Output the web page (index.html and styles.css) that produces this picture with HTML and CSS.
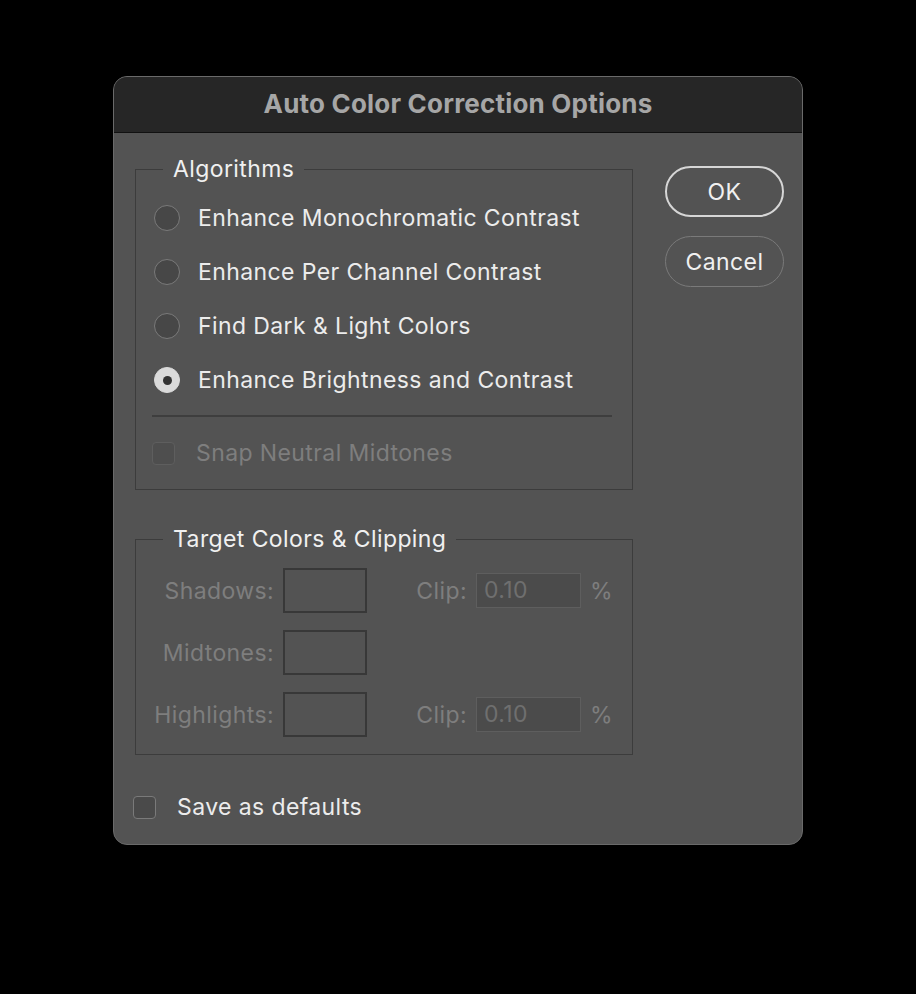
FILE: index.html
```html
<!DOCTYPE html>
<html lang="en">
<head>
    <meta charset="UTF-8">
    <meta name="viewport" content="width=device-width, initial-scale=1.0">
    <title>Auto Color Correction Options</title>
    <link rel="stylesheet" href="styles.css">
</head>
<body>
    <div class="dialog">
        <!-- title bar -->
        <div class="titlebar">Auto Color Correction Options</div>
        <div class="body">
            <div class="main">
                <fieldset class="group">
                    <legend>Algorithms</legend>
                    <div class="radios">
                        <label class="radio-row"><span class="radio"></span>Enhance Monochromatic Contrast</label>
                        <label class="radio-row"><span class="radio"></span>Enhance Per Channel Contrast</label>
                        <label class="radio-row"><span class="radio"></span>Find Dark &amp; Light Colors</label>
                        <label class="radio-row"><span class="radio checked"></span>Enhance Brightness and Contrast</label>
                    </div>
                    <div class="sep"></div>
                    <label class="check-row disabled"><span class="check"></span>Snap Neutral Midtones</label>
                </fieldset>

                <fieldset class="group targets">
                    <legend>Target Colors &amp; Clipping</legend>
                    <div class="grid">
                        <span class="lbl">Shadows:</span>
                        <span class="swatch"></span>
                        <span class="lbl">Clip:</span>
                        <span class="num">0.10</span>
                        <span class="pct">%</span>

                        <span class="lbl">Midtones:</span>
                        <span class="swatch"></span>
                        <span></span>
                        <span></span>
                        <span></span>

                        <span class="lbl">Highlights:</span>
                        <span class="swatch"></span>
                        <span class="lbl">Clip:</span>
                        <span class="num">0.10</span>
                        <span class="pct">%</span>
                    </div>
                </fieldset>

                <label class="check-row save"><span class="check"></span>Save as defaults</label>
            </div>
            <!-- buttons -->
            <div class="side">
                <button class="btn primary">OK</button>
                <button class="btn">Cancel</button>
            </div>
        </div>
    </div>
</body>
</html>
```

FILE: styles.css
```css
* {
  margin: 0;
  padding: 0;
  box-sizing: border-box;
}
body {
  background: #000;
  padding: 76px 0 0 113px;
  font-family: "Inter", "Liberation Sans", sans-serif;
  font-size: 23px;
  letter-spacing: 0.4px;
  color: #ececec;
}
.dialog {
  width: 690px;
  height: 769px;
  background: #535353;
  border: 1px solid #6a6a6a;
  border-radius: 14px;
  overflow: hidden;
}
.titlebar {
  height: 56px;
  background: #262626;
  border-bottom: 1px solid #111;
  color: #a6a6a6;
  font-weight: 700;
  font-size: 26px;
  letter-spacing: 0.2px;
  text-align: center;
  line-height: 53px;
}
.body {
  display: flex;
  padding: 23px 18px 0 21px;
}
.main {
  width: 498px;
}
.side {
  display: flex;
  flex-direction: column;
  gap: 19px;
  margin-left: 32px;
  padding-top: 10px;
}
.btn {
  width: 119px;
  height: 51px;
  border-radius: 26px;
  background: transparent;
  border: 1.5px solid #7a7a7a;
  color: #f0f0f0;
  font: 23px "Inter", "Liberation Sans", sans-serif;
  letter-spacing: 0.4px;
}
.btn.primary {
  border: 2px solid #d6d6d6;
}
.group {
  border: 1px solid #3c3c3c;
  padding: 0 20px 0 16px;
}
.group legend {
  margin-left: 11px;
  padding: 0 10px;
  line-height: 26px;
  color: #f0f0f0;
}
.radios {
  padding-top: 9px;
}
.radio-row {
  display: flex;
  align-items: center;
  height: 54px;
}
.radio {
  width: 26px;
  height: 26px;
  border-radius: 50%;
  background: #474747;
  border: 1.5px solid #7a7a7a;
  margin: 0 18px 0 2px;
  display: flex;
  align-items: center;
  justify-content: center;
}
.radio.checked {
  background: #dadada;
  border-color: #dadada;
}
.radio.checked::after {
  content: "";
  width: 9px;
  height: 9px;
  border-radius: 50%;
  background: #333;
}
.sep {
  height: 2px;
  background: #3e3e3e;
  margin-top: 8px;
}
.check-row {
  display: flex;
  align-items: center;
  height: 74px;
}
.check {
  width: 23px;
  height: 23px;
  border: 1.5px solid #7a7a7a;
  background: #4a4a4a;
  border-radius: 4px;
  margin-right: 21px;
}
.check-row.disabled {
  color: #7e7e7e;
  height: 72px;
}
.check-row.disabled .check {
  border-color: #5e5e5e;
  background: #4e4e4e;
}
.targets {
  margin-top: 36px;
  padding: 0;
}
.targets legend {
  margin-left: 27px;
}
.grid {
  display: grid;
  grid-template-columns: 138px 84px 91px 105px auto;
  grid-auto-rows: 45px;
  column-gap: 9px;
  row-gap: 17px;
  align-items: center;
  padding: 16px 0 17px;
  color: #7e7e7e;
}
.lbl {
  text-align: right;
}
.swatch {
  height: 45px;
  border: 2px solid #383838;
}
.num {
  height: 35px;
  background: #4b4b4b;
  border: 1px solid #5e5e5e;
  padding-left: 7px;
  line-height: 33px;
  color: #6f6f6f;
}
.pct {
  color: #7e7e7e;
}
.check-row.save {
  height: 64px;
  margin-top: 20px;
  margin-left: -2px;
}
```
